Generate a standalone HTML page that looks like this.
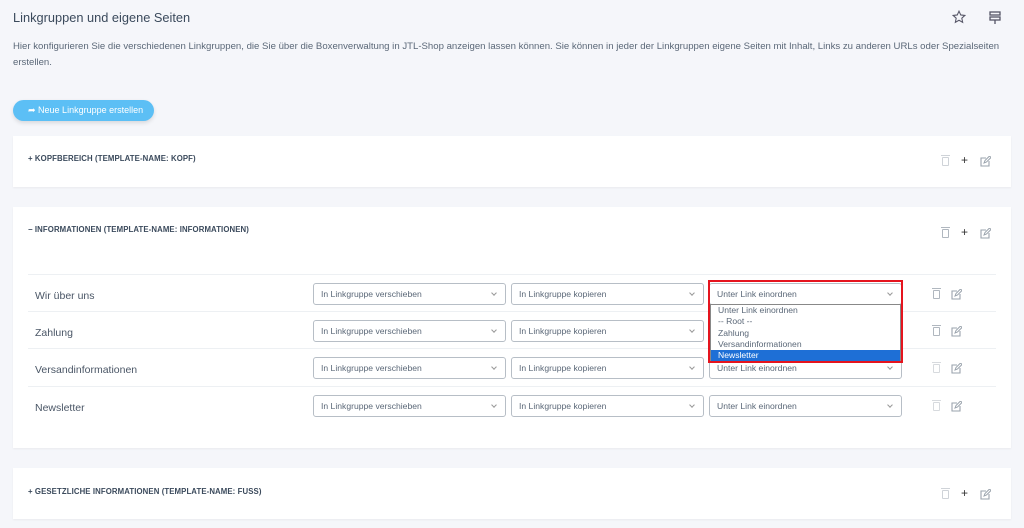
<!DOCTYPE html>
<html><head><meta charset="utf-8"><style>
*{box-sizing:border-box;margin:0;padding:0}
body{width:1024px;height:528px;background:#f5f6fa;font-family:"Liberation Sans",sans-serif;color:#3b4a5c;position:relative;overflow:hidden}
.abs{position:absolute}
h1{position:absolute;left:13px;top:10px;font-size:12.8px;font-weight:normal;color:#3b4a5c}
.desc{position:absolute;left:13px;top:39px;width:1000px;font-size:9.6px;line-height:16px;color:#5b6878}
.btn{position:absolute;left:13px;top:100px;width:141px;height:21px;border-radius:11px;background:#5cbff5;color:#fff;font-size:9px;line-height:21px;padding-left:15px;box-shadow:0 2px 4px rgba(0,0,0,.12)}
.card{position:absolute;left:13px;width:998px;background:#fff;box-shadow:0 1px 2px rgba(0,0,0,.05)}
.ht{position:absolute;left:15px;font-size:7.8px;font-weight:bold;color:#3b4a5c;letter-spacing:.1px}
.ic{position:absolute;font-size:11px;color:#aab2bb}
.row{position:absolute;left:15px;width:968px;height:37px;border-top:1px solid #edf0f3}
.row .n{position:absolute;left:7px;top:15px;font-size:10.5px;color:#4a5666}
.sel{position:absolute;top:8px;width:193px;height:22px;border:1px solid #b7bec6;border-radius:3px;font-size:8.6px;color:#5b6878;line-height:20px;padding-left:7px}
.sel:after{content:"";position:absolute;right:9px;top:7px;width:3px;height:3px;border-right:1px solid #999;border-bottom:1px solid #999;transform:rotate(45deg)}
.dd{position:absolute;left:710px;top:304px;width:191px;height:57px;background:#fff;border:1px solid #888;font-size:8.6px;color:#5b6878;line-height:11.3px;padding-left:7px}
.trash{position:absolute;width:7px;height:9px;border:1.3px solid #b0b7bf;border-radius:1px}
.trash:before{content:"";position:absolute;left:-2px;top:-3px;width:9px;height:1.3px;background:#b0b7bf}
.ed{position:absolute;width:11px;height:11px}
</style></head><body>
<h1>Linkgruppen und eigene Seiten</h1>
<svg class="abs" style="left:952px;top:10px" width="14" height="14" viewBox="0 0 24 24"><path d="M12 2l3 6.5 7 .8-5.2 4.8 1.5 7L12 17.6 5.7 21.1l1.5-7L2 9.3l7-.8z" fill="none" stroke="#556" stroke-width="1.8"/></svg>
<svg class="abs" style="left:989px;top:11px" width="12" height="13" viewBox="0 0 12 13"><rect x="1" y="1" width="10" height="3" fill="none" stroke="#556" stroke-width="1.3"/><rect x="1" y="6" width="10" height="3" fill="none" stroke="#556" stroke-width="1.3"/><path d="M6 9v4" stroke="#556" stroke-width="1.3"/></svg>
<div class="desc">Hier konfigurieren Sie die verschiedenen Linkgruppen, die Sie über die Boxenverwaltung in JTL-Shop anzeigen lassen können. Sie können in jeder der Linkgruppen eigene Seiten mit Inhalt, Links zu anderen URLs oder Spezialseiten erstellen.</div>
<div class="btn">➦ Neue Linkgruppe erstellen</div>

<svg width="0" height="0" style="position:absolute"><defs><symbol id="e" viewBox="0 0 11 11"><path d="M6 2H1v8h8V5" fill="none" stroke="#9aa3ad" stroke-width="1.1"/><path d="M4 7l1-2.5L9.5 0 11 1.5 6.5 6z" fill="none" stroke="#9aa3ad" stroke-width="1"/></symbol></defs></svg>

<div class="card" style="top:136px;height:51px">
<div class="ht" style="top:18px">+ KOPFBEREICH (TEMPLATE-NAME: KOPF)</div>
<div class="trash" style="left:929px;top:21px;opacity:.6"></div>
<div class="ic" style="left:948px;top:17px;color:#333;font-size:12px">+</div>
<svg class="ed" style="left:967px;top:20px"><use href="#e"/></svg>
</div>

<div class="card" style="top:207px;height:241px">
<div class="ht" style="top:18px">− INFORMATIONEN (TEMPLATE-NAME: INFORMATIONEN)</div>
<div class="trash" style="left:929px;top:22px"></div>
<div class="ic" style="left:948px;top:18px;color:#333;font-size:12px">+</div>
<svg class="ed" style="left:967px;top:21px"><use href="#e"/></svg>
<div class="row" style="top:67px"><div class="n">Wir über uns</div><div class="sel" style="left:285px">In Linkgruppe verschieben</div><div class="sel" style="left:483px">In Linkgruppe kopieren</div><div class="sel" style="left:681px">Unter Link einordnen</div><div class="trash" style="left:905px;top:15px"></div><svg class="ed" style="left:923px;top:14px"><use href="#e"/></svg></div>
<div class="row" style="top:104px"><div class="n">Zahlung</div><div class="sel" style="left:285px">In Linkgruppe verschieben</div><div class="sel" style="left:483px">In Linkgruppe kopieren</div><div class="sel" style="left:681px">Unter Link einordnen</div><div class="trash" style="left:905px;top:15px"></div><svg class="ed" style="left:923px;top:14px"><use href="#e"/></svg></div>
<div class="row" style="top:141px"><div class="n">Versandinformationen</div><div class="sel" style="left:285px">In Linkgruppe verschieben</div><div class="sel" style="left:483px">In Linkgruppe kopieren</div><div class="sel" style="left:681px">Unter Link einordnen</div><div class="trash" style="left:905px;top:15px;opacity:.5"></div><svg class="ed" style="left:923px;top:14px"><use href="#e"/></svg></div>
<div class="row" style="top:179px"><div class="n">Newsletter</div><div class="sel" style="left:285px">In Linkgruppe verschieben</div><div class="sel" style="left:483px">In Linkgruppe kopieren</div><div class="sel" style="left:681px">Unter Link einordnen</div><div class="trash" style="left:905px;top:15px;opacity:.5"></div><svg class="ed" style="left:923px;top:14px"><use href="#e"/></svg></div>
</div>

<div class="dd">Unter Link einordnen<br>-- Root --<br>Zahlung<br>Versandinformationen<div style="position:absolute;left:0;top:45px;width:189px;height:11px;background:#1e6fd6;color:#fff;padding-left:7px;line-height:11px">Newsletter</div></div>
<div class="abs" style="left:708px;top:280px;width:195px;height:83px;border:2px solid #e5141e"></div>

<div class="card" style="top:468px;height:51px">
<div class="ht" style="top:19px">+ GESETZLICHE INFORMATIONEN (TEMPLATE-NAME: FUSS)</div>
<div class="trash" style="left:929px;top:22px;opacity:.6"></div>
<div class="ic" style="left:948px;top:18px;color:#333;font-size:12px">+</div>
<svg class="ed" style="left:967px;top:21px"><use href="#e"/></svg>
</div>
</body></html>
